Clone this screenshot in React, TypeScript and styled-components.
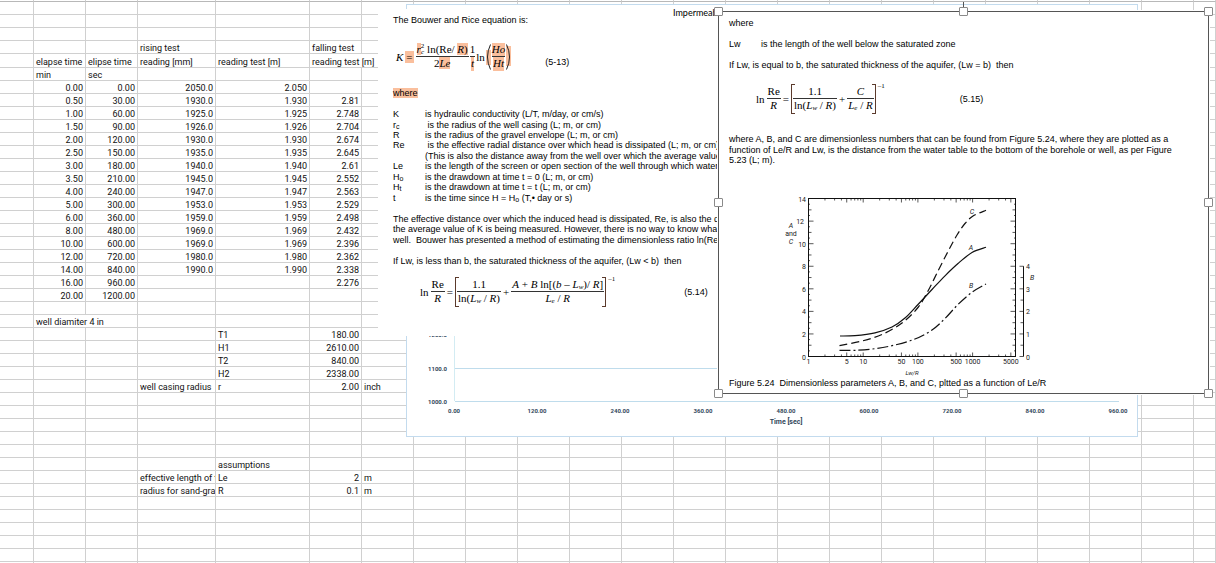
import React from "react";
import styled, { createGlobalStyle, css } from "styled-components";

const GlobalStyle = createGlobalStyle`
  *, *::before, *::after { box-sizing: border-box; }
  body { margin: 0; background: #fff; color: #000; }
`;

const Workspace = styled.main`
  position: relative;
  height: 100vh;
  overflow: hidden;
  background: #fff;
`;

/* ---------- worksheet ---------- */

const Sheet = styled.table`
  width: 100%;
  table-layout: fixed;
  border-collapse: separate;
  border-spacing: 0;
  font: 9px/10px Roboto, sans-serif;
  color: #111;
`;

const Column = styled.col<{ $width?: number }>`
  width: ${(p) => (p.$width ? `${p.$width}px` : "auto")};
`;

const Row = styled.tr<{ $tall?: boolean }>`
  height: ${(p) => (p.$tall ? 14 : 13)}px;
`;

const FrozenRow = styled.tr`
  height: 2px;
`;

const FrozenCell = styled.td`
  height: 2px;
  padding: 0;
  border-right: 1px solid #d0d0d0;
  border-bottom: 1px solid #b8b8b8;
`;

const Cell = styled.td<{ $number?: boolean }>`
  padding: 2px 2px 0;
  border-right: 1px solid #d0d0d0;
  border-bottom: 1px solid #d0d0d0;
  overflow: hidden;
  white-space: nowrap;
  vertical-align: bottom;
  text-align: ${(p) => (p.$number ? "right" : "left")};
`;

type CellData = { text: string; span?: number };
type RowData = Record<number, string | CellData>;

const COLUMN_WIDTHS = [34, 52, 52, 78, 94, 52, ...Array(16).fill(52)];
const COLUMN_COUNT = COLUMN_WIDTHS.length + 1;

const readings: string[][] = [
  ["0.00", "0.00", "2050.0", "2.050", ""],
  ["0.50", "30.00", "1930.0", "1.930", "2.81"],
  ["1.00", "60.00", "1925.0", "1.925", "2.748"],
  ["1.50", "90.00", "1926.0", "1.926", "2.704"],
  ["2.00", "120.00", "1930.0", "1.930", "2.674"],
  ["2.50", "150.00", "1935.0", "1.935", "2.645"],
  ["3.00", "180.00", "1940.0", "1.940", "2.61"],
  ["3.50", "210.00", "1945.0", "1.945", "2.552"],
  ["4.00", "240.00", "1947.0", "1.947", "2.563"],
  ["5.00", "300.00", "1953.0", "1.953", "2.529"],
  ["6.00", "360.00", "1959.0", "1.959", "2.498"],
  ["8.00", "480.00", "1969.0", "1.969", "2.432"],
  ["10.00", "600.00", "1969.0", "1.969", "2.396"],
  ["12.00", "720.00", "1980.0", "1.980", "2.362"],
  ["14.00", "840.00", "1990.0", "1.990", "2.338"],
  ["16.00", "960.00", "", "", "2.276"],
  ["20.00", "1200.00", "", "", ""],
];

const blank = (count: number): RowData[] => Array.from({ length: count }, () => ({}));

const HEADER_ROW = 4;

const rows: RowData[] = [
  ...blank(3),
  { 3: "rising test", 5: "falling test" },
  {
    1: "elapse time",
    2: "elipse time",
    3: "reading [mm]",
    4: "reading test [m]",
    5: { text: "reading test [m]", span: 2 },
  },
  { 1: "min", 2: "sec" },
  ...readings.map((r) => ({ 1: r[0], 2: r[1], 3: r[2], 4: r[3], 5: r[4] })),
  ...blank(1),
  { 1: { text: "well diamiter 4 in", span: 2 } },
  { 4: "T1", 5: "180.00" },
  { 4: "H1", 5: "2610.00" },
  { 4: "T2", 5: "840.00" },
  { 4: "H2", 5: "2338.00" },
  { 3: "well casing radius", 4: "r", 5: "2.00", 6: "inch" },
  ...blank(5),
  { 4: "assumptions" },
  { 3: "effective length of t", 4: "Le", 5: "2", 6: "m" },
  { 3: "radius for sand-grav", 4: "R", 5: "0.1", 6: "m" },
  ...blank(6),
];

function SheetRow({ data, tall }: { data: RowData; tall?: boolean }) {
  const cells: React.ReactNode[] = [];
  for (let c = 0; c < COLUMN_COUNT; ) {
    const raw = data[c];
    const cell: CellData = typeof raw === "object" ? raw : { text: raw ?? "" };
    const span = cell.span ?? 1;
    cells.push(
      <Cell key={c} colSpan={span} $number={/^[\d.]+$/.test(cell.text)}>
        {cell.text}
      </Cell>
    );
    c += span;
  }
  return <Row $tall={tall}>{cells}</Row>;
}

/* ---------- time chart ---------- */

const ChartFrame = styled.section`
  position: absolute;
  left: 406px;
  top: 4px;
  width: 732px;
  height: 433px;
  background: #fff;
  border: 1px solid #c3dbee;
`;

const ChartSvg = styled.svg`
  display: block;
  width: 100%;
  height: 100%;
  font: bold 6px Roboto, sans-serif;
  fill: #33475b;
`;

const TIMES = ["0.00", "120.00", "240.00", "360.00", "480.00", "600.00", "720.00", "840.00", "960.00"];

function TimeChart() {
  return (
    <ChartFrame aria-label="Reading over time">
      <ChartSvg viewBox="0 0 730 431">
        <line x1="47.5" x2="47.5" y1="320" y2="396" stroke="#d3ecf3" />
        <line x1="48" x2="712" y1="363.5" y2="363.5" stroke="#bfdcec" />
        <line x1="48" x2="712" y1="396.5" y2="396.5" stroke="#bfdcec" />
        {["1200.0", "1100.0", "1000.0"].map((label, i) => (
          <text key={label} x="40" y={332 + i * 33 + (i > 0 ? 1 : 0)} textAnchor="end">
            {label}
          </text>
        ))}
        {TIMES.map((label, i) => (
          <text key={label} x={47 + i * 83} y="408" textAnchor="middle">
            {label}
          </text>
        ))}
        <text x="379" y="419" textAnchor="middle" fontSize="7">
          Time [sec]
        </text>
      </ChartSvg>
    </ChartFrame>
  );
}

/* ---------- pasted document pictures ---------- */

const pageText = css`
  font: 9px/10px "Liberation Sans", Arial, sans-serif;
  white-space: nowrap;
`;

const EquationPage = styled.article`
  position: absolute;
  left: 378px;
  top: 9px;
  width: 341px;
  height: 327px;
  padding: 6px 0 0 15px;
  overflow: hidden;
  background: #fff;
  ${pageText}
`;

const ModelNote = styled.span`
  position: absolute;
  left: 673px;
  top: 7px;
  font: 9px/11px Lato, sans-serif;
`;

const Lines = styled.div<{ $rows: number; $height: number; $indent: number }>`
  display: grid;
  grid-template-columns: ${(p) => p.$indent}px 1fr;
  grid-template-rows: repeat(${(p) => p.$rows}, minmax(0, 1fr));
  height: ${(p) => p.$height}px;
`;

const Line = styled.p<{ $row: number }>`
  grid-row: ${(p) => p.$row};
  grid-column: 1 / -1;
  margin: 0;
`;

const Term = styled.span<{ $row: number }>`
  grid-row: ${(p) => p.$row};
  grid-column: 1;
`;

const Meaning = styled.span<{ $row: number }>`
  grid-row: ${(p) => p.$row};
  grid-column: 2;
`;

const Small = styled.sub`
  font-size: 7px;
  line-height: 0;
  vertical-align: -1px;
`;

const Mark = styled.mark`
  background: #fabf9d;
  color: inherit;
`;

const MarkedSign = styled(Mark)`
  margin: 0 1px;
  padding: 0 1px;
`;

/* ---------- equations ---------- */

const Equation = styled.div<{ $from?: number; $to?: number }>`
  grid-column: 1 / -1;
  grid-row: ${(p) => (p.$from ? `${p.$from} / ${p.$to}` : "auto")};
  display: flex;
  align-items: center;
  gap: 2px;
  font: 11px/12px "Liberation Serif", "Times New Roman", serif;
`;

const ConductivityEquation = styled(Equation)`
  gap: 1px;
  padding: 1px 0 0 3px;
`;

const PaddedEquation = styled(Equation)`
  padding: 3px 0 0 27px;
`;

const EquationBlock = styled.div`
  display: flex;
  height: 52px;
  padding-left: 27px;
`;

const Fraction = styled.span<{ $tight?: boolean }>`
  display: inline-grid;
  justify-items: center;
  & > :first-child {
    width: 100%;
    text-align: center;
    border-bottom: 1px solid #333;
  }
  & > * {
    height: 14px;
    padding: 0 ${(p) => (p.$tight ? 0 : 1)}px;
  }
`;

const Bracketed = styled.span`
  display: flex;
  align-items: center;
  gap: 2px;
  height: 30px;
  padding: 0 2px;
  position: relative;
  &::before,
  &::after {
    content: "";
    position: absolute;
    top: 0;
    bottom: 0;
    width: 4px;
    border: 1px solid #5b3a2c;
  }
  &::before {
    left: 0;
    border-right: 0;
  }
  &::after {
    right: 0;
    border-left: 0;
  }
`;

const Power = styled.span`
  align-self: center;
  height: 34px;
  font-size: 7px;
  line-height: 8px;
`;

const Parens = styled.svg`
  width: 5px;
  height: 26px;
  fill: none;
  stroke: #222;
`;

const EquationNumber = styled.span<{ $gap: number; $drop?: number }>`
  margin-left: ${(p) => p.$gap}px;
  padding-top: ${(p) => p.$drop ?? 0}px;
  font: 9px/10px "Liberation Sans", Arial, sans-serif;
`;

const Squared = styled.span`
  display: inline-grid;
  vertical-align: top;
  height: 12px;
  font-size: 7px;
  line-height: 6px;
`;

function LogRatio() {
  return (
    <>
      <span>ln</span>
      <Fraction>
        <span>Re</span>
        <i>R</i>
      </Fraction>
      <span>=</span>
    </>
  );
}

function WellTerm() {
  return (
    <Fraction>
      <span>1.1</span>
      <span>
        ln(<i>L<Small>w</Small></i> / <i>R</i>)
      </span>
    </Fraction>
  );
}

function BouwerRicePage() {
  return (
    <EquationPage>
      <Lines $rows={24} $height={251} $indent={32}>
        <Line $row={1}>The Bouwer and Rice equation is:</Line>
        <ConductivityEquation $from={3} $to={7}>
          <i>K</i>
          <MarkedSign>=</MarkedSign>
          <Fraction>
            <span>
              <Mark><i>r</i></Mark>
              <Squared>
                <span>2</span>
                <i>c</i>
              </Squared>{" "}
              ln(Re/ <Mark><i>R</i>)</Mark>
            </span>
            <span>
              2<Mark><i>Le</i></Mark>
            </span>
          </Fraction>
          <Fraction $tight>
            <span>1</span>
            <Mark><i>t</i></Mark>
          </Fraction>
          <span>ln</span>
          <Parens viewBox="0 0 5 26" aria-hidden="true">
            <rect y="6" width="5" height="15" fill="#fabf9d" stroke="none" />
            <path d="M4.5.5Q-1.5 13 4.5 25.5" />
          </Parens>
          <Fraction $tight>
            <Mark><i>Ho</i></Mark>
            <Mark><i>Ht</i></Mark>
          </Fraction>
          <Parens viewBox="0 0 5 26" aria-hidden="true">
            <rect y="2" width="5" height="20" fill="#fabf9d" stroke="none" />
            <path d="M.5.5Q6.5 13 .5 25.5" />
          </Parens>
          <EquationNumber $gap={33} $drop={9}>(5-13)</EquationNumber>
        </ConductivityEquation>
        <Line $row={8}>
          <Mark>where</Mark>
        </Line>
        <Term $row={10}>K</Term>
        <Meaning $row={10}>is hydraulic conductivity (L/T, m/day, or cm/s)</Meaning>
        <Term $row={11}>r<Small>c</Small></Term>
        <Meaning $row={11}>&nbsp;is the radius of the well casing (L; m, or cm)</Meaning>
        <Term $row={12}>R</Term>
        <Meaning $row={12}>is the radius of the gravel envelope (L; m, or cm)</Meaning>
        <Term $row={13}>Re</Term>
        <Meaning $row={13}>&nbsp;is the effective radial distance over which head is dissipated (L; m, or cm)</Meaning>
        <Meaning $row={14}>(This is also the distance away from the well over which the average value</Meaning>
        <Term $row={15}>Le</Term>
        <Meaning $row={15}>is the length of the screen or open section of the well through which water</Meaning>
        <Term $row={16}>H<Small>o</Small></Term>
        <Meaning $row={16}>is the drawdown at time t = 0 (L; m, or cm)</Meaning>
        <Term $row={17}>H<Small>t</Small></Term>
        <Meaning $row={17}>is the drawdown at time t = t (L; m, or cm)</Meaning>
        <Term $row={18}>t</Term>
        <Meaning $row={18}>is the time since H = H<Small>o</Small> (T,• day or s)</Meaning>
        <Line $row={20}>The effective distance over which the induced head is dissipated, Re, is also the d</Line>
        <Line $row={21}>the average value of K is being measured. However, there is no way to know what</Line>
        <Line $row={22}>well.&nbsp; Bouwer has presented a method of estimating the dimensionless ratio ln(Re/</Line>
        <Line $row={24}>If Lw, is less than b, the saturated thickness of the aquifer, (Lw &lt; b)&nbsp; then</Line>
      </Lines>
      <EquationBlock>
        <Equation>
          <LogRatio />
          <Bracketed>
            <WellTerm />
            <span>+</span>
            <Fraction>
              <span>
                <i>A</i> + <i>B</i> ln[(<i>b</i> – <i>L<Small>w</Small></i>)/ <i>R</i>]
              </span>
              <span>
                <i>L<Small>e</Small></i> / <i>R</i>
              </span>
            </Fraction>
          </Bracketed>
          <Power>–1</Power>
          <EquationNumber $gap={67}>(5.14)</EquationNumber>
        </Equation>
      </EquationBlock>
    </EquationPage>
  );
}

/* ---------- selected picture ---------- */

const SelectedPicture = styled.article`
  position: absolute;
  left: 718px;
  top: 11px;
  width: 491px;
  height: 383px;
  padding: 6px 0 0 10px;
  background: #fff;
  border: 1px solid #555;
  box-shadow: 0 0 0 1px #fff;
  ${pageText}
`;

const HandleFrame = styled.div`
  position: absolute;
  inset: -5px;
  display: grid;
  grid-template-columns: repeat(3, 9px);
  grid-template-rows: repeat(3, 9px);
  place-content: space-between;
  pointer-events: none;
`;

const Handle = styled.span<{ $column: number; $row: number }>`
  grid-column: ${(p) => p.$column};
  grid-row: ${(p) => p.$row};
  background: #fff;
  border: 1px solid #8a8a8a;
  border-radius: 1px;
`;

const RotateStem = styled.span`
  position: absolute;
  left: 50%;
  top: -10px;
  width: 1px;
  height: 8px;
  margin-left: -1px;
  background: #555;
`;

const Figure = styled.figure`
  margin: 19px 0 0;
`;

const Plot = styled.svg`
  display: block;
  width: 280px;
  height: 193px;
  margin-left: 46px;
  font: 7px Roboto, sans-serif;
  fill: #222;
`;

const Caption = styled.figcaption`
  white-space: pre;
`;

type Point = [number, number];

/* Catmull-Rom spline through the sampled points. */
function curve(points: Point[]) {
  let d = `M${points[0][0]} ${points[0][1]}`;
  for (let i = 0; i < points.length - 1; i++) {
    const p0 = points[i - 1] ?? points[i];
    const p1 = points[i];
    const p2 = points[i + 1];
    const p3 = points[i + 2] ?? p2;
    d += `C${p1[0] + (p2[0] - p0[0]) / 6} ${p1[1] + (p2[1] - p0[1]) / 6} ${p2[0] - (p3[0] - p1[0]) / 6} ${
      p2[1] - (p3[1] - p1[1]) / 6
    } ${p2[0]} ${p2[1]}`;
  }
  return d;
}

const A_CURVE: Point[] = [[65, 151], [80, 150.6], [100, 147.8], [117, 142], [130, 133], [143, 119.5], [157, 104.5], [170, 90.8], [183, 78.5], [197, 67.5], [211, 62.3]];
const C_CURVE: Point[] = [[64.5, 160.7], [87, 156], [107, 149.5], [127, 138], [143, 122.5], [153, 106], [163, 86], [173, 66.5], [182, 50], [190, 38.5], [198, 31], [211, 25.3]];
const B_CURVE: Point[] = [[64.5, 165.3], [80, 165.3], [100, 163.7], [120, 160], [140, 154], [157, 145], [170, 133.5], [183, 119.5], [197, 107.3], [211, 99]];

const PLOT = { left: 33.5, right: 240.5, top: 13.5, bottom: 171.5 };
const logX = (value: number) => PLOT.left + Math.log10(value) * 54.7;
const levelY = (value: number) => PLOT.bottom - value * 11.28;

const LOG_TICKS = [1, 10, 100, 1000]
  .flatMap((decade) => [1, 2, 3, 4, 5, 6, 7, 8, 9].map((n) => n * decade))
  .filter((value) => value <= 5000);

function ParameterPlot() {
  return (
    <Plot viewBox="0 0 280 193" role="img" aria-label="Parameters A, B and C against Le/R">
      <g fill="none" stroke="#111">
        <rect x={PLOT.left} y={PLOT.top} width={PLOT.right - PLOT.left} height={PLOT.bottom - PLOT.top} />
        {LOG_TICKS.map((v) => {
          const size = /^[15]/.test(String(v)) ? 4 : 2;
          return (
            <path
              key={v}
              strokeWidth=".7"
              d={`M${logX(v)} ${PLOT.bottom}v-${size}M${logX(v)} ${PLOT.top}v${size}`}
            />
          );
        })}
        {Array.from({ length: 27 }, (_, i) => (i + 1) / 2).map((v) => {
          const size = v % 2 === 0 ? 5 : v % 1 === 0 ? 3 : 1.5;
          return (
            <path
              key={v}
              strokeWidth=".7"
              d={`M${PLOT.left} ${levelY(v)}h${size}M${PLOT.right} ${levelY(v)}h-${size}`}
            />
          );
        })}
        <path d={curve(A_CURVE)} strokeWidth="1.2" />
        <path d={curve(C_CURVE)} strokeWidth="1.2" strokeDasharray="8 4" />
        <path d={curve(B_CURVE)} strokeWidth="1.2" strokeDasharray="11 3 2 3" />
        <path d={`M248.5 ${levelY(8)}V${PLOT.bottom}`} />
        {[0, 1, 2, 3, 4, 5, 6, 7, 8].map((v) => (
          <path key={v} strokeWidth=".7" d={`M248.5 ${levelY(v)}h-${v % 2 ? 3 : 4}`} />
        ))}
      </g>
      <g textAnchor="end">
        {[0, 2, 4, 6, 8, 10, 12, 14].map((v) => (
          <text key={v} x={v === 12 ? 29 : 31} y={levelY(v) + 3}>
            {v}
          </text>
        ))}
      </g>
      <g textAnchor="middle">
        {[1, 5, 10, 50, 100, 500, 1000, 5000].map((v) => (
          <text key={v} x={logX(v)} y="179">
            {v}
          </text>
        ))}
        {[0, 1, 2, 3, 4].map((v) => (
          <text key={v} x="253" y={levelY(v * 2) + 3}>
            {v}
          </text>
        ))}
        <text x="16" y="51">and</text>
        <g fontStyle="italic">
          <text x="16" y="43">A</text>
          <text x="16" y="59">C</text>
          <text x="257" y="95">B</text>
          <text x="197" y="29">C</text>
          <text x="196" y="65">A</text>
          <text x="196" y="103">B</text>
          <text x="137" y="190" fontSize="6">Lw/R</text>
        </g>
      </g>
    </Plot>
  );
}

const HANDLES: Point[] = [[1, 1], [2, 1], [3, 1], [1, 2], [3, 2], [1, 3], [2, 3], [3, 3]];

function FigurePicture() {
  return (
    <SelectedPicture>
      <Lines $rows={14} $height={148} $indent={32}>
        <Line $row={1}>where</Line>
        <Term $row={3}>Lw</Term>
        <Meaning $row={3}>is the length of the well below the saturated zone</Meaning>
        <Line $row={5}>If Lw, is equal to b, the saturated thickness of the aquifer, (Lw = b)&nbsp; then</Line>
        <PaddedEquation $from={6} $to={11}>
          <LogRatio />
          <Bracketed>
            <WellTerm />
            <span>+</span>
            <Fraction>
              <i>C</i>
              <span>
                <i>L<Small>e</Small></i> / <i>R</i>
              </span>
            </Fraction>
          </Bracketed>
          <Power>–1</Power>
          <EquationNumber $gap={73}>(5.15)</EquationNumber>
        </PaddedEquation>
        <Line $row={12}>
          where A, B, and C are dimensionless numbers that can be found from Figure 5.24, where they are plotted as a
        </Line>
        <Line $row={13}>
          function of Le/R and Lw, is the distance from the water table to the bottom of the borehole or well, as per
          Figure
        </Line>
        <Line $row={14}>5.23 (L; m).</Line>
      </Lines>
      <Figure>
        <ParameterPlot />
        <Caption>Figure 5.24  Dimensionless parameters A, B, and C, pltted as a function of Le/R</Caption>
      </Figure>
      <RotateStem />
      <HandleFrame>
        {HANDLES.map(([column, row]) => (
          <Handle key={`${column}-${row}`} $column={column} $row={row} />
        ))}
      </HandleFrame>
    </SelectedPicture>
  );
}

export default function App() {
  return (
    <>
      <GlobalStyle />
      <Workspace>
        <Sheet>
          <colgroup>
            {COLUMN_WIDTHS.map((w, i) => (
              <Column key={i} $width={w} />
            ))}
            <Column />
          </colgroup>
          <tbody>
            <FrozenRow>
              {Array.from({ length: COLUMN_COUNT }, (_, i) => (
                <FrozenCell key={i} />
              ))}
            </FrozenRow>
            {rows.map((data, i) => (
              <SheetRow key={i} data={data} tall={i === HEADER_ROW} />
            ))}
          </tbody>
        </Sheet>
        <TimeChart />
        <BouwerRicePage />
        <ModelNote>Impermeable</ModelNote>
        <FigurePicture />
      </Workspace>
    </>
  );
}
